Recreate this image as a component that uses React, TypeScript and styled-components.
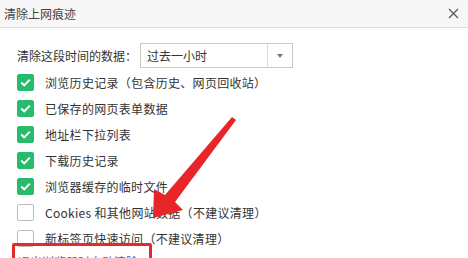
import styled, { createGlobalStyle } from "styled-components";

const GlobalStyle = createGlobalStyle`
  html, body {
    margin: 0;
    padding: 0;
    background: #ffffff;
  }
  body {
    font-family: "Noto Sans CJK SC", "Noto Sans", sans-serif;
    font-size: 12px;
    color: #333333;
  }
`;

const Dialog = styled.div`
  position: relative;
  width: 468px;
  height: 258px;
  overflow: hidden;
  background: #ffffff;
`;

const TitleBar = styled.div`
  height: 27px;
  display: flex;
  align-items: center;
  justify-content: space-between;
  padding: 0 9px 0 4px;
  background: #f7f7f7;
  border-bottom: 1px solid #dedede;

  .title {
    font-size: 12px;
    color: #444;
    line-height: 1;
  }
`;

const Body = styled.div`
  padding: 15px 0 0 17px;
`;

const RangeRow = styled.div`
  display: flex;
  align-items: center;
  height: 25px;
  margin-bottom: 1px;

  .label {
    width: 123px;
    color: #333;
  }
`;

const Select = styled.div`
  width: 151px;
  height: 23px;
  display: flex;
  border: 1px solid #c9c9c9;
  background: #fff;

  .value {
    flex: 1;
    display: flex;
    align-items: center;
    padding-left: 6px;
  }

  .arrow {
    width: 24px;
    border-left: 1px solid #dcdcdc;
    display: flex;
    align-items: center;
    justify-content: center;
  }

  .arrow::after {
    content: "";
    border-left: 3px solid transparent;
    border-right: 3px solid transparent;
    border-top: 4px solid #777;
  }
`;

const OptionRow = styled.label`
  display: flex;
  align-items: center;
  height: 26px;
  gap: 11px;
`;

const Box = styled.span<{ $checked: boolean }>`
  width: 17px;
  height: 17px;
  box-sizing: border-box;
  border-radius: 2px;
  display: flex;
  align-items: center;
  justify-content: center;
  background: ${(p) => (p.$checked ? "#28bb6c" : "#ffffff")};
  border: 1px solid ${(p) => (p.$checked ? "#28bb6c" : "#bdbdbd")};
`;

const OptionText = styled.span`
  letter-spacing: 0.3px;
  color: #333;
`;

const Link = styled.div`
  margin-top: 2px;
  padding-left: 1px;
  color: #2b6fd6;
  font-size: 12px;
`;

const Highlight = styled.div`
  position: absolute;
  left: 12px;
  top: 243px;
  width: 134px;
  height: 30px;
  border: 3px solid #e52a2a;
  border-radius: 2px;
`;

const Arrow = styled.svg`
  position: absolute;
  left: 0;
  top: 0;
  pointer-events: none;
`;

const options = [
  { text: "浏览历史记录（包含历史、网页回收站）", checked: true },
  { text: "已保存的网页表单数据", checked: true },
  { text: "地址栏下拉列表", checked: true },
  { text: "下载历史记录", checked: true },
  { text: "浏览器缓存的临时文件", checked: true },
  { text: "Cookies 和其他网站数据（不建议清理）", checked: false },
  { text: "新标签页快速访问（不建议清理）", checked: false },
];

export default function App() {
  return (
    <>
      <GlobalStyle />
      <Dialog>
        <TitleBar>
          <span className="title">清除上网痕迹</span>
          <svg width="11" height="11" viewBox="0 0 11 11">
            <path d="M1 1 L10 10 M10 1 L1 10" stroke="#555" strokeWidth="1.2" fill="none" />
          </svg>
        </TitleBar>
        <Body>
          <RangeRow>
            <span className="label">清除这段时间的数据：</span>
            <Select>
              <span className="value">过去一小时</span>
              <span className="arrow" />
            </Select>
          </RangeRow>
          {options.map((o, i) => (
            <OptionRow key={i}>
              <Box $checked={o.checked}>
                {o.checked && (
                  <svg width="11" height="9" viewBox="0 0 11 9">
                    <path d="M1.2 4.6 L4.2 7.4 L9.8 1.6" stroke="#fff" strokeWidth="2" fill="none" />
                  </svg>
                )}
              </Box>
              <OptionText>{o.text}</OptionText>
            </OptionRow>
          ))}
          <Link>退出浏览器时自动清除</Link>
        </Body>
        <Highlight />
        <Arrow width="468" height="258" viewBox="0 0 468 258">
          <polygon
            points="232,117 236,120 175,202 183,210 153,218 154,189 165,195"
            fill="#e8262a"
          />
        </Arrow>
      </Dialog>
    </>
  );
}
